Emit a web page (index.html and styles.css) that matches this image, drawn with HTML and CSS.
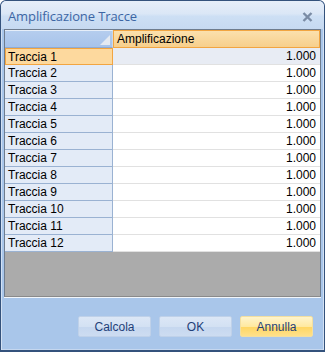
FILE: index.html
```html
<!DOCTYPE html>
<html>
<head>
<meta charset="utf-8">
<link rel="stylesheet" href="styles.css">
</head>
<body>
<div class="window">
  <div class="titlebar">
    <span class="title">Amplificazione Tracce</span>
    <svg class="close" width="11" height="10" viewBox="0 0 11 10"><path d="M1.5 1 L9.5 9 M9.5 1 L1.5 9" stroke="#7b8ca5" stroke-width="2.4" fill="none"/></svg>
  </div>
  <div class="grid">
    <div class="row head">
      <div class="rh corner"><span class="tri"></span></div>
      <div class="cell colhead">Amplificazione</div>
    </div>
    <div class="row sel"><div class="rh">Traccia 1</div><div class="cell">1.000</div></div>
    <div class="row"><div class="rh">Traccia 2</div><div class="cell">1.000</div></div>
    <div class="row"><div class="rh">Traccia 3</div><div class="cell">1.000</div></div>
    <div class="row"><div class="rh">Traccia 4</div><div class="cell">1.000</div></div>
    <div class="row"><div class="rh">Traccia 5</div><div class="cell">1.000</div></div>
    <div class="row"><div class="rh">Traccia 6</div><div class="cell">1.000</div></div>
    <div class="row"><div class="rh">Traccia 7</div><div class="cell">1.000</div></div>
    <div class="row"><div class="rh">Traccia 8</div><div class="cell">1.000</div></div>
    <div class="row"><div class="rh">Traccia 9</div><div class="cell">1.000</div></div>
    <div class="row"><div class="rh">Traccia 10</div><div class="cell">1.000</div></div>
    <div class="row"><div class="rh">Traccia 11</div><div class="cell">1.000</div></div>
    <div class="row"><div class="rh">Traccia 12</div><div class="cell">1.000</div></div>
    <div class="empty"></div>
  </div>
  <div class="buttons">
    <button class="btn">Calcola</button>
    <button class="btn">OK</button>
    <button class="btn hot">Annulla</button>
  </div>
</div>
</body>
</html>
```
FILE: styles.css
```css
html, body {
  margin: 0;
  padding: 0;
  background: #ffffff;
}
.window {
  width: 325px;
  height: 352px;
  box-sizing: border-box;
  border: 1px solid #34527c;
  border-bottom-width: 2px;
  border-radius: 6px 6px 0 0;
  background: #a9c6ea;
  box-shadow: inset 1px 0 0 #d3e1f3, inset -1px 0 0 #d3e1f3, inset 0 -1px 0 #c5d7ef;
  display: flex;
  flex-direction: column;
  overflow: hidden;
  font-family: "Liberation Sans", Arial, sans-serif;
}
.titlebar {
  height: 28px;
  flex: none;
  display: flex;
  align-items: center;
  justify-content: space-between;
  padding: 0 11px 0 7px;
  box-sizing: border-box;
  background: linear-gradient(#e6eef9, #dbe7f6 45%, #cddff4 55%, #c6d9f1);
  border-radius: 5px 5px 0 0;
}
.title {
  font-family: "Open Sans", "Noto Sans", sans-serif;
  font-size: 13px;
  color: #3d66a4;
  letter-spacing: -0.1px;
  margin-top: 1px;
}
.close {
  display: block;
  margin-top: 3px;
}
.grid {
  margin: 0 3px;
  border: 1px solid #6e7c8e;
  background: #ababab;
  display: flex;
  flex-direction: column;
  height: 268px;
  box-sizing: border-box;
  border-bottom-color: #8a8a8a;
  box-shadow: 0 1px 0 #f2f6fb;
}
.row {
  display: flex;
  height: 17px;
  flex: none;
  font-size: 12px;
  line-height: 16px;
}
.rh {
  width: 108px;
  box-sizing: border-box;
  background: #e3ebf7;
  border-right: 1px solid #9ab2d2;
  border-bottom: 1px solid #9ab2d2;
  padding-left: 3px;
  color: #000;
}
.cell {
  flex: 1;
  background: #ffffff;
  border-bottom: 1px solid #e1e1e1;
  text-align: right;
  padding-right: 4px;
  color: #000;
}
.row.head {
  height: 18px;
}
.corner {
  position: relative;
  background: linear-gradient(#b5cdee, #a7c3ea);
  border-top: 1px solid #e6eef9;
  border-right: 1px solid #c9d8ec;
  border-bottom: 1px solid #8fabd2;
}
.tri {
  position: absolute;
  right: 2px;
  bottom: 2px;
  width: 0;
  height: 0;
  border-left: 10px solid transparent;
  border-bottom: 10px solid #e4eaf2;
}
.colhead {
  text-align: left;
  padding-left: 3px;
  background: linear-gradient(#fbe0ad, #f7cf8c);
  border: 1px solid #f2a541;
  line-height: 16px;
}
.row.sel .rh {
  background: #fdd99e;
  border: 1px solid #f2a541;
  padding-left: 2px;
}
.row.sel .cell {
  background: #e8ecf4;
}
.empty {
  flex: 1;
  background: #ababab;
}
.buttons {
  display: flex;
  justify-content: flex-end;
  gap: 8px;
  padding: 19px 11px 0 0;
}
.btn {
  width: 73px;
  height: 21px;
  box-sizing: border-box;
  border: 1px solid #bfd1e9;
  border-radius: 2px;
  background: linear-gradient(#dce7f6, #d3e1f3 50%, #c5d7ef 51%, #cddcf1);
  font-family: "Liberation Sans", Arial, sans-serif;
  font-size: 12px;
  color: #1f3f78;
  padding: 0;
}
.btn.hot {
  border-color: #f3dfa0;
  background: linear-gradient(#fff4cc, #ffe9a0 50%, #ffd661 51%, #ffe08a);
}
```
